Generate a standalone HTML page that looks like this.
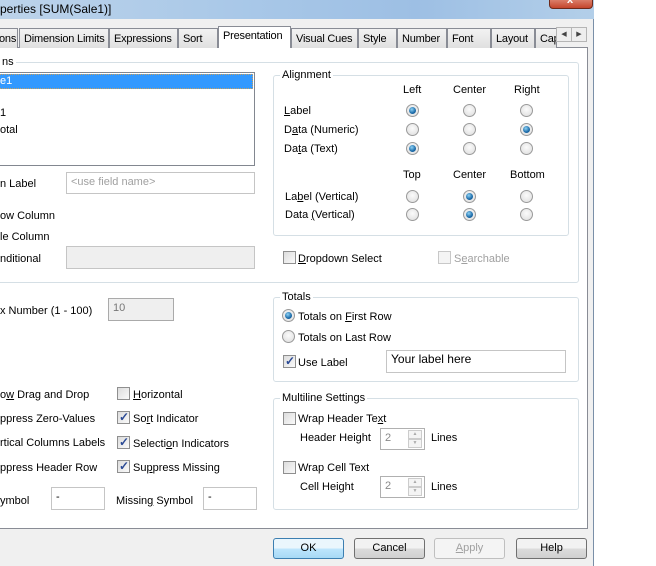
<!DOCTYPE html>
<html><head><meta charset="utf-8"><style>
*{box-sizing:border-box;margin:0;padding:0}
body{width:656px;height:566px;background:#fff;position:relative;overflow:hidden;font-family:"Liberation Sans",sans-serif;font-size:11px;color:#000}
.a{position:absolute;white-space:nowrap}
.t{position:absolute;white-space:nowrap;line-height:14px;top:0}
.dlg{position:absolute;left:0;top:0;width:594px;height:566px;background:#f0f0f0;border-right:1px solid #7a8fa8}
.title{position:absolute;left:0;top:0;width:594px;height:19px;background:linear-gradient(90deg,#bcd3ea,#a9c8e8 40%,#9dbfe4 70%,#b3cfe9);}
.close{position:absolute;left:549px;top:-3px;width:44px;height:12px;background:linear-gradient(#e08b78,#c4452c);border:1px solid #6d2a1c;border-radius:0 0 4px 4px}
.tab{position:absolute;top:28px;height:20px;border:1px solid #898c95;border-bottom:none;background:linear-gradient(#f2f2f2,#e0e0e0);padding:4px 0 0 4px;font-size:11px;white-space:nowrap;overflow:hidden;letter-spacing:-0.2px}
.panel{position:absolute;left:-2px;top:47px;width:590px;height:482px;background:#fff;border:1px solid #898c95}
.gb{position:absolute;border:1px solid #d5dfe5;border-radius:3px}
.gl{position:absolute;background:#fff;padding:0 2px;line-height:12px;white-space:nowrap}
.r{position:absolute;width:13px;height:13px;border-radius:50%;border:1px solid #9a9a9a;background:radial-gradient(circle at 50% 40%,#fbfbfb,#dcdcdc)}
.r.on::after{content:"";position:absolute;left:2px;top:2px;width:7px;height:7px;border-radius:50%;background:radial-gradient(circle at 40% 35%,#8fd3f5,#1b6aa8 60%,#0d4a80)}
.c{position:absolute;width:13px;height:13px;border:1px solid #8f8f8f;background:linear-gradient(135deg,#dcdcdc,#fafafa)}
.c.on::after{content:"✓";position:absolute;left:1px;top:-2px;font-size:12px;color:#2b4a95;font-weight:bold}
.c.dis{border-color:#c8c8c8;background:#f4f4f4}
.tb{position:absolute;border:1px solid #c5c5c5;background:#fff;padding:1px 4px;line-height:16px;white-space:nowrap}
.gray{background:#efefef}
.btn{position:absolute;top:538px;height:21px;width:71px;border:1px solid #707070;border-radius:3px;background:linear-gradient(#f2f2f2 50%,#dcdcdc 50%,#d0d0d0);text-align:center;line-height:19px}
u{text-decoration:underline}
</style></head><body>
<div class="dlg"></div>
<div class="title"></div>
<div class="a" style="left:0;top:2px;font-size:12px">perties [SUM(Sale1)]</div>
<div class="close"><div class="a" style="left:17px;top:-4px;color:#fff;font-weight:bold;font-size:11px">x</div></div>

<div class="panel"></div>
<div class="tab" style="left:-2px;width:20px;padding-left:0">ons</div>
<div class="tab" style="left:19px;width:90px">Dimension Limits</div>
<div class="tab" style="left:109px;width:69px">Expressions</div>
<div class="tab" style="left:178px;width:40px">Sort</div>
<div class="tab" style="left:218px;top:26px;height:22px;width:73px;background:#fff;padding-top:3px;z-index:2">Presentation</div>
<div class="tab" style="left:291px;width:67px">Visual Cues</div>
<div class="tab" style="left:358px;width:39px">Style</div>
<div class="tab" style="left:397px;width:50px">Number</div>
<div class="tab" style="left:447px;width:44px">Font</div>
<div class="tab" style="left:491px;width:44px">Layout</div>
<div class="tab" style="left:535px;width:22px">Cap</div>
<div class="a" style="left:556px;top:27px;width:16px;height:15px;border:1px solid #b5b5b5;background:#eee;font-size:7px;text-align:center;line-height:13px;color:#444">◀</div>
<div class="a" style="left:571px;top:27px;width:16px;height:15px;border:1px solid #b5b5b5;background:#eee;font-size:7px;text-align:center;line-height:13px;color:#444">▶</div>

<div class="gb" style="left:-10px;top:62px;width:589px;height:221px"></div>
<div class="gl" style="left:0;top:56px">ns</div>
<div class="a" style="left:-2px;top:72px;width:257px;height:94px;border:1px solid #828790;background:#fff"></div>
<div class="a" style="left:-1px;top:74px;width:254px;height:15px;background:#3399ff;border:1px dotted #c8a060;color:#fff;line-height:13px">e1</div>
<div class="t" style="left:0;top:106px">1</div>
<div class="t" style="left:0;top:123px">otal</div>
<div class="t" style="left:0;top:177px">n Label</div>
<div class="tb" style="left:66px;top:172px;width:189px;height:22px;color:#a0a0a0">&lt;use field name&gt;</div>
<div class="t" style="left:0;top:209px">ow Column</div>
<div class="t" style="left:0;top:230px">le Column</div>
<div class="t" style="left:0;top:252px">nditional</div>
<div class="tb gray" style="left:66px;top:246px;width:189px;height:23px"></div>

<div class="t" style="left:0;top:304px">x Number (1 - 100)</div>
<div class="tb gray" style="left:108px;top:298px;width:66px;height:23px;color:#777;border-color:#aaa">10</div>

<div class="t" style="left:0;top:388px">o<u>w</u> Drag and Drop</div>
<div class="t" style="left:0;top:412px">ppress Zero-Values</div>
<div class="t" style="left:0;top:436px">rtical Columns Labels</div>
<div class="t" style="left:0;top:461px">ppress Header Row</div>
<div class="c" style="left:117px;top:387px"></div><div class="t" style="left:133px;top:388px"><u>H</u>orizontal</div>
<div class="c on" style="left:117px;top:411px"></div><div class="t" style="left:133px;top:412px">So<u>r</u>t Indicator</div>
<div class="c on" style="left:117px;top:436px"></div><div class="t" style="left:133px;top:437px">Selecti<u>o</u>n Indicators</div>
<div class="c on" style="left:117px;top:460px"></div><div class="t" style="left:133px;top:461px">Su<u>p</u>press Missing</div>
<div class="t" style="left:0;top:494px">ymbol</div>
<div class="tb" style="left:51px;top:487px;width:54px;height:23px">-</div>
<div class="t" style="left:116px;top:494px">Missin<u>g</u> Symbol</div>
<div class="tb" style="left:203px;top:487px;width:54px;height:23px">-</div>

<div class="gb" style="left:273px;top:75px;width:296px;height:161px"></div>
<div class="gl" style="left:280px;top:69px">Alignment</div>
<div class="t" style="left:403px;top:83px">Left</div>
<div class="t" style="left:453px;top:83px">Center</div>
<div class="t" style="left:514px;top:83px">Right</div>
<div class="t" style="left:284px;top:104px"><u>L</u>abel</div>
<div class="t" style="left:284px;top:123px">D<u>a</u>ta (Numeric)</div>
<div class="t" style="left:284px;top:142px">Da<u>t</u>a (Text)</div>
<div class="r on" style="left:406px;top:104px"></div><div class="r" style="left:463px;top:104px"></div><div class="r" style="left:520px;top:104px"></div>
<div class="r" style="left:406px;top:123px"></div><div class="r" style="left:463px;top:123px"></div><div class="r on" style="left:520px;top:123px"></div>
<div class="r on" style="left:406px;top:142px"></div><div class="r" style="left:463px;top:142px"></div><div class="r" style="left:520px;top:142px"></div>
<div class="t" style="left:403px;top:168px">Top</div>
<div class="t" style="left:453px;top:168px">Center</div>
<div class="t" style="left:510px;top:168px">Bottom</div>
<div class="t" style="left:285px;top:190px">La<u>b</u>el (Vertical)</div>
<div class="t" style="left:285px;top:208px">Data <u>(</u>Vertical)</div>
<div class="r" style="left:406px;top:190px"></div><div class="r on" style="left:463px;top:190px"></div><div class="r" style="left:520px;top:190px"></div>
<div class="r" style="left:406px;top:208px"></div><div class="r on" style="left:463px;top:208px"></div><div class="r" style="left:520px;top:208px"></div>

<div class="c" style="left:283px;top:251px"></div><div class="t" style="left:298px;top:252px"><u>D</u>ropdown Select</div>
<div class="c dis" style="left:438px;top:251px"></div><div class="t" style="left:454px;top:252px;color:#a0a0a0">S<u>e</u>archable</div>

<div class="gb" style="left:273px;top:297px;width:306px;height:85px"></div>
<div class="gl" style="left:280px;top:291px">Totals</div>
<div class="r on" style="left:282px;top:309px"></div><div class="t" style="left:298px;top:310px">Totals on <u>F</u>irst Row</div>
<div class="r" style="left:282px;top:330px"></div><div class="t" style="left:298px;top:331px">Totals on Last Row</div>
<div class="c on" style="left:283px;top:355px"></div><div class="t" style="left:298px;top:356px">Use Label</div>
<div class="tb" style="left:386px;top:350px;width:180px;height:23px;font-size:12px;line-height:15px">Your label here</div>

<div class="gb" style="left:273px;top:398px;width:306px;height:112px"></div>
<div class="gl" style="left:280px;top:392px">Multiline Settings</div>
<div class="c" style="left:283px;top:412px"></div><div class="t" style="left:298px;top:412px">Wrap Header Te<u>x</u>t</div>
<div class="t" style="left:300px;top:431px">Header Height</div>
<div class="tb" style="left:380px;top:428px;width:45px;height:22px;color:#888;border-color:#b0b0b0">2</div>
<div class="a" style="left:408px;top:430px;width:14px;height:9px;border:1px solid #ccc;background:#f4f4f4;font-size:5px;color:#aaa;text-align:center;line-height:7px">▲</div>
<div class="a" style="left:408px;top:439px;width:14px;height:9px;border:1px solid #ccc;background:#f4f4f4;font-size:5px;color:#aaa;text-align:center;line-height:7px">▼</div>
<div class="t" style="left:431px;top:431px">Lines</div>
<div class="c" style="left:283px;top:461px"></div><div class="t" style="left:298px;top:461px">Wrap Cell Text</div>
<div class="t" style="left:300px;top:480px">Cell Height</div>
<div class="tb" style="left:380px;top:476px;width:45px;height:22px;color:#888;border-color:#b0b0b0">2</div>
<div class="a" style="left:408px;top:478px;width:14px;height:9px;border:1px solid #ccc;background:#f4f4f4;font-size:5px;color:#aaa;text-align:center;line-height:7px">▲</div>
<div class="a" style="left:408px;top:487px;width:14px;height:9px;border:1px solid #ccc;background:#f4f4f4;font-size:5px;color:#aaa;text-align:center;line-height:7px">▼</div>
<div class="t" style="left:431px;top:480px">Lines</div>

<div class="btn" style="left:273px;border-color:#3c7fb1;background:linear-gradient(#eaf6fd 50%,#bee6fd 50%,#a7d9f5)">OK</div>
<div class="btn" style="left:354px">Cancel</div>
<div class="btn" style="left:434px;border-color:#bfbfbf;background:#f4f4f4;color:#a0a0a0"><u>A</u>pply</div>
<div class="btn" style="left:516px">Help</div>
</body></html>
